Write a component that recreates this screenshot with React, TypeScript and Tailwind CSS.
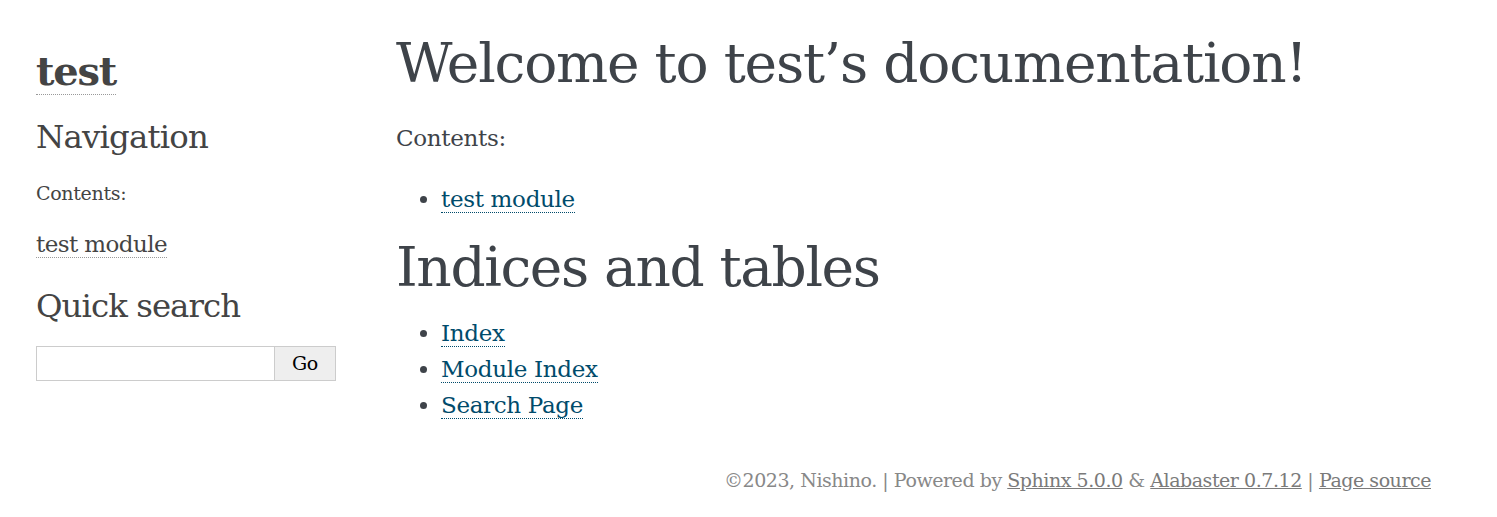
import React from 'react';

const serif = { fontFamily: '"DejaVu Serif", "Liberation Serif", serif' };

const indexLinks = ['Index', 'Module Index', 'Search Page'];

export default function App() {
  return (
    <div className="bg-white min-h-[517px] text-[#3E4349] tracking-[-0.02em]" style={serif}>
      <div className="ml-[21px] w-[1410px]">
        <div className="flex">
          {/* sidebar */}
          <aside className="w-[330px] px-[15px] shrink-0 text-[#444]">
            <h1 className="mt-[45px] text-[40px] leading-[52px] font-bold tracking-[-0.03em]">
              <a href="#" className="border-b border-dotted border-[#999]">test</a>
            </h1>
            <h3 className="mt-[18px] text-[32.4px] leading-[44px] tracking-[-0.025em]">Navigation</h3>
            <p className="mt-[20px] text-[19px] leading-[28px]">Contents:</p>
            <div className="mt-[21px] text-[23px] leading-[32px] tracking-[-0.025em]">
              <a href="#" className="border-b border-dotted border-[#999]">test module</a>
            </div>
            <h3 className="mt-[24px] text-[32.4px] leading-[44px] tracking-[-0.029em]">Quick search</h3>
            <form className="mt-[18px] flex h-[35px]">
              <input className="w-[239px] border border-[#ccc] bg-white outline-none" />
              <button type="button" className="flex-1 border border-l-0 border-[#ccc] bg-[#eee] text-[19px] text-black">Go</button>
            </form>
          </aside>

          {/* body */}
          <main className="flex-1 px-[45px] pt-[27px]">
            <h1 className="text-[55px] leading-[72px] whitespace-nowrap tracking-[-0.022em]">Welcome to test’s documentation!</h1>
            <p className="mt-[21px] text-[23px] leading-[36px]">Contents:</p>
            <ul className="mt-[25px] list-disc pl-[45px] text-[23px] leading-[36px]">
              <li>
                <a href="#" className="text-[#004B6B] border-b border-dotted border-[#004B6B]">test module</a>
              </li>
            </ul>
            <h1 className="mt-[14px] text-[55px] leading-[72px] tracking-[-0.025em]">Indices and tables</h1>
            <ul className="mt-[12px] list-disc pl-[45px] text-[23px] leading-[36px]">
              {indexLinks.map((l) => (
                <li key={l}>
                  <a href="#" className="text-[#004B6B] border-b border-dotted border-[#004B6B]">{l}</a>
                </li>
              ))}
            </ul>
          </main>
        </div>

        <footer className="mt-[42px] text-right text-[19px] leading-[30px] text-[#888] tracking-[-0.024em]">
          ©2023, Nishino. | Powered by <a href="#" className="underline text-[#7a7a7a]">Sphinx 5.0.0</a> &amp;{' '}
          <a href="#" className="underline text-[#7a7a7a]">Alabaster 0.7.12</a> | <a href="#" className="underline text-[#7a7a7a]">Page source</a>
        </footer>
      </div>
    </div>
  );
}
